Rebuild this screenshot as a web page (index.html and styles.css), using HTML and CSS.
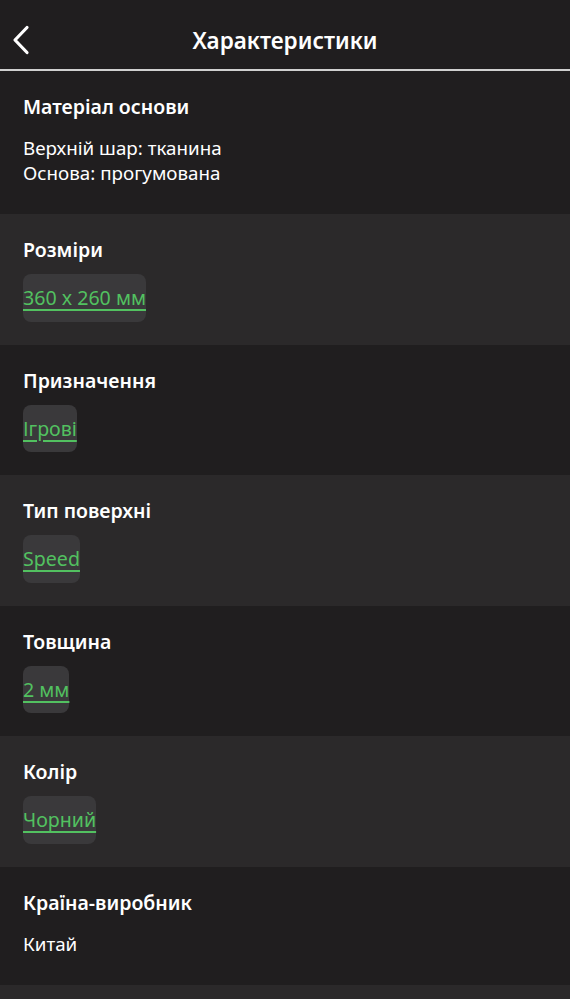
FILE: index.html
```html
<!DOCTYPE html>
<html lang="uk">
<head>
    <meta charset="UTF-8">
    <meta name="viewport" content="width=device-width, initial-scale=1.0">
    <title>Характеристики</title>
    <link rel="stylesheet" href="styles.css">
</head>
<body>
    <header class="top-bar">
        <button class="back-btn" aria-label="Назад">
            <svg width="20" height="30" viewBox="0 0 20 30">
                <path d="M16 2.5 L4 15 L16 27.5" fill="none" stroke="#fff" stroke-width="3.2" stroke-linecap="round" stroke-linejoin="round"/>
            </svg>
        </button>
        <h1 class="top-title">Характеристики</h1>
    </header>

    <main class="specs">
        <section class="spec text">
            <h2 class="spec-title">Матеріал основи</h2>
            <p class="spec-text">Верхній шар: тканина<br>Основа: прогумована</p>
        </section>
        <section class="spec alt">
            <h2 class="spec-title">Розміри</h2>
            <a class="spec-chip" href="#">360 x 260 мм</a>
        </section>
        <section class="spec">
            <h2 class="spec-title">Призначення</h2>
            <a class="spec-chip" href="#">Ігрові</a>
        </section>
        <section class="spec alt">
            <h2 class="spec-title">Тип поверхні</h2>
            <a class="spec-chip" href="#">Speed</a>
        </section>
        <section class="spec">
            <h2 class="spec-title">Товщина</h2>
            <a class="spec-chip" href="#">2 мм</a>
        </section>
        <section class="spec alt">
            <h2 class="spec-title">Колір</h2>
            <a class="spec-chip" href="#">Чорний</a>
        </section>
        <section class="spec text">
            <h2 class="spec-title">Країна-виробник</h2>
            <p class="spec-text">Китай</p>
        </section>
        <section class="spec alt"></section>
    </main>
</body>
</html>
```

FILE: styles.css
```css
:root {
    --bg: #201e1f;
    --bg-alt: #2b292a;
    --chip: #3a393b;
    --green: #52c160;
}

body {
    margin: 0;
    background: var(--bg);
    color: #fff;
    font-family: "Noto Sans", sans-serif;
}

.top-bar {
    height: 58px;
    padding-top: 11px;
    display: flex;
    align-items: center;
    justify-content: center;
    position: relative;
    border-bottom: 2px solid #d0d0d0;
}

.back-btn {
    position: absolute;
    left: 11px;
    top: 25px;
    background: none;
    border: none;
    padding: 0;
    display: flex;
}

.top-title {
    margin: 0;
    font-size: 22.5px;
    font-weight: 600;
}

.spec {
    display: flex;
    flex-direction: column;
    align-items: flex-start;
    background: var(--bg);
    padding: 24px 23px 23px;
}

.spec.alt {
    background: var(--bg-alt);
}

.spec.text {
    padding-bottom: 28px;
}

.spec-title {
    margin: 0;
    font-size: 19.5px;
    line-height: 24px;
    font-weight: 600;
}

.spec-text {
    margin: 17px 0 0;
    font-size: 18.8px;
    line-height: 25px;
}

.spec-chip {
    margin-top: 12px;
    padding: 11.25px 0;
    background: var(--chip);
    border-radius: 8px;
    color: var(--green);
    font-size: 19.6px;
    line-height: 25px;
    text-decoration: underline;
    text-decoration-thickness: 2px;
    text-underline-offset: 4px;
}
```
